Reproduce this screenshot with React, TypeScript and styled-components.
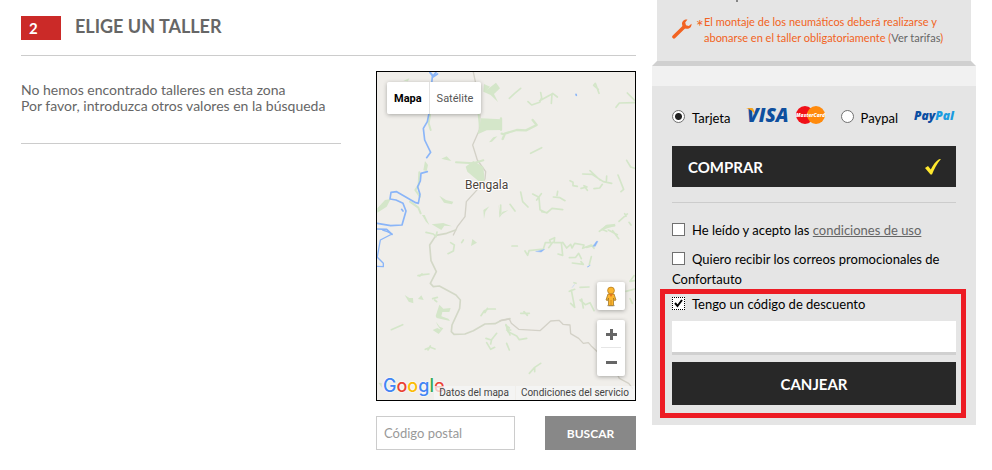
import React, { useState } from "react";
import styled, { createGlobalStyle } from "styled-components";

const GlobalStyle = createGlobalStyle`
  *, *::before, *::after { box-sizing: border-box; }
  body {
    margin: 0;
    background: #fff;
    color: #666;
    font-family: Lato, "Liberation Sans", sans-serif;
    font-size: 14px;
    line-height: 16px;
  }
  button, input { font-family: inherit; margin: 0; }
  button { cursor: pointer; }
`;

const Page = styled.div`
  display: grid;
  grid-template-columns: minmax(0, 1fr) 324px;
  column-gap: 16px;
  align-items: start;
  padding: 0 16px 20px 21px;
`;

/* ---------- Workshop selection ---------- */

const Workshops = styled.main`
  padding-top: 16px;
`;

const StepHeader = styled.header`
  display: flex;
  align-items: flex-start;
  gap: 14px;
  padding-bottom: 15px;
  border-bottom: 1px solid #ccc;
`;

const StepNumber = styled.span`
  width: 40px;
  padding-left: 8px;
  background: #cb2a28;
  color: #fff;
  font-size: 15px;
  font-weight: 700;
  line-height: 24px;
`;

const StepTitle = styled.h2`
  margin: 0;
  font-size: 18px;
  font-weight: 700;
  line-height: 20px;
`;

const Columns = styled.div`
  display: grid;
  grid-template-columns: minmax(0, 1fr) 260px;
  column-gap: 35px;
  align-items: start;
  padding-top: 15px;
`;

const EmptyMessage = styled.p`
  margin: 0;
  padding: 11px 0 29px;
  border-bottom: 1px solid #ccc;
`;

const MapFrame = styled.div`
  position: relative;
  height: 330px;
  border: 1px solid #000;
  background: #f0eeea;
  overflow: hidden;
  font-family: Roboto, sans-serif;
`;

const MapDrawing = styled.svg`
  display: block;
  width: 100%;
  height: 100%;
`;

const MapTypes = styled.div`
  position: absolute;
  top: 10px;
  left: 10px;
  display: flex;
  border-radius: 2px;
  box-shadow: 0 1px 4px rgba(0, 0, 0, 0.3);
`;

const MapType = styled.button<{ $active?: boolean }>`
  height: 32px;
  padding: ${(p) => (p.$active ? "0 7px" : "0 8px 0 7px")};
  border: 0;
  border-left: ${(p) => (p.$active ? "0" : "1px solid #e2e2e2")};
  border-radius: ${(p) => (p.$active ? "2px 0 0 2px" : "0 2px 2px 0")};
  background: #fff;
  color: ${(p) => (p.$active ? "#000" : "#565656")};
  font-size: 11px;
  font-weight: ${(p) => (p.$active ? 700 : 400)};
`;

const MapTools = styled.div`
  position: absolute;
  right: 10px;
  bottom: 24px;
  display: grid;
  gap: 10px;
`;

const ToolGroup = styled.div`
  display: grid;
  width: 28px;
  border-radius: 2px;
  background: #fff;
  box-shadow: 0 1px 4px rgba(0, 0, 0, 0.3);
`;

const ToolButton = styled.button`
  display: grid;
  place-items: center;
  height: 28px;
  padding: 0;
  border: 0;
  background: transparent;
`;

const ToolDivider = styled.span`
  height: 1px;
  margin: -1px 4px;
  background: #e6e6e6;
`;

const GoogleLogo = styled.a`
  position: absolute;
  left: 6px;
  bottom: 0;
  color: #4285f4;
  font-family: Inter, sans-serif;
  font-size: 18px;
  font-weight: 500;
  line-height: 28px;
  text-decoration: none;
  text-shadow: 0 0 2px #fff, 0 0 2px #fff;
`;

const Letter = styled.span<{ $color: string }>`
  color: ${(p) => p.$color};
`;

const MapCredits = styled.div`
  position: absolute;
  right: 0;
  bottom: 0;
  display: flex;
  gap: 1px;
`;

const Credit = styled.a`
  padding: 0 6px 0 5px;
  background: rgba(245, 245, 245, 0.75);
  color: #444;
  font-size: 10px;
  line-height: 14px;
  text-decoration: none;
`;

const SearchForm = styled.form`
  display: flex;
  gap: 30px;
  margin-top: 15px;
`;

const PostalInput = styled.input`
  flex: 1;
  min-width: 0;
  height: 34px;
  padding: 0 7px;
  border: 1px solid #ccc;
  color: #666;
  font-size: 13px;
  &::placeholder { color: #999; opacity: 1; }
`;

const SearchButton = styled.button`
  width: 91px;
  height: 34px;
  padding: 0;
  border: 0;
  background: #888;
  color: #fff;
  font-size: 12px;
  font-weight: 700;
`;

/* ---------- Order summary ---------- */

const Notice = styled.div`
  display: flex;
  align-items: flex-start;
  margin: 0 5px;
  padding: 14px 15px 15px;
  background: #e5e5e5;
  color: #f26322;
  font-size: 11px;
`;

const ClippedLine = styled.div`
  height: 2px;
  margin: 0 5px;
  padding-left: 79px;
  background: #e5e5e5;
  &::before {
    content: "";
    display: block;
    width: 2px;
    height: 2px;
    background: #858585;
  }
`;

const WrenchIcon = styled.svg`
  flex: none;
  margin: 3px 4px 0 0;
`;

const Asterisk = styled.span`
  flex: none;
  width: 8px;
  font-size: 18px;
  line-height: 20px;
`;

const NoticeText = styled.p`
  margin: -2px 0 0;
  white-space: nowrap;
`;

const RatesLink = styled.a`
  color: #666;
  text-decoration: none;
`;

const Lip = styled.div`
  height: 5px;
  background: #d0d0d0;
  clip-path: polygon(5px 0, calc(100% - 5px) 0, 100% 100%, 0 100%);
`;

const Band = styled.div`
  height: 20px;
  background: #f1f1f1;
`;

const Panel = styled.form`
  padding: 20px 20px 7px;
  background: #e5e5e5;
  color: #000;
  font-size: 13px;
  line-height: 20px;
`;

const Methods = styled.div`
  display: flex;
  align-items: flex-start;
  justify-content: space-between;
  height: 40px;
`;

const Method = styled.div`
  display: flex;
  align-items: flex-start;
`;

const MethodLabel = styled.label`
  padding-top: 2px;
`;

const Radio = styled.input`
  appearance: none;
  width: 13px;
  height: 13px;
  margin: 4px 7px 0 0;
  border: 1px solid #707070;
  border-radius: 50%;
  background: #fff;
  &:checked { background: radial-gradient(circle, #222 3px, #fff 4px); }
`;

const CardLogos = styled.svg`
  margin: -6px 0 0 16px;
`;

const PaypalLogo = styled.svg`
  margin-left: 16px;
`;

const BuyButton = styled.button`
  display: flex;
  align-items: center;
  justify-content: space-between;
  width: 100%;
  height: 41px;
  padding: 0 15px 0 16px;
  border: 0;
  background: #282828;
  color: #fff;
  font-size: 15px;
  font-weight: 700;
`;

const Rule = styled.hr`
  margin: 15px 0 17px;
  border: 0;
  border-top: 1px solid #ccc;
`;

const CheckRow = styled.div<{ $spaced?: boolean }>`
  margin-bottom: ${(p) => (p.$spaced ? "9px" : "0")};
`;

const Checkbox = styled.input`
  appearance: none;
  width: 13px;
  height: 13px;
  margin: 0 7px 0 0;
  vertical-align: -1px;
  border: 1px solid #707070;
  background: #fff;
  &:checked {
    border: 1px dotted #000;
    background: #fff url("data:image/svg+xml,%3Csvg xmlns='http://www.w3.org/2000/svg' viewBox='0 0 11 11'%3E%3Cpath d='M2 5l2.5 3L9 2' fill='none' stroke='%23000' stroke-width='2'/%3E%3C/svg%3E");
  }
`;

const TermsLink = styled.a`
  color: #666;
  text-decoration: underline;
`;

const Discount = styled.section`
  margin: 0 -10px 0 -12px;
  padding: 0 5px 8px 7px;
  border: 5px solid #ed1c24;
`;

const CodeInput = styled.input`
  display: block;
  width: 100%;
  height: 34px;
  margin: 7px 0;
  padding: 0 8px;
  border: 0;
  border-bottom: 3px solid #d0d0d0;
  background: #fff;
  font-size: 13px;
`;

const RedeemButton = styled.button`
  display: block;
  width: 100%;
  height: 43px;
  border: 0;
  background: #282828;
  color: #fff;
  font-size: 15px;
  font-weight: 700;
`;

function Terrain() {
  return (
    <MapDrawing viewBox="0 0 258 328" preserveAspectRatio="xMidYMid slice" aria-hidden="true">
      <g fill="none" strokeLinejoin="round" strokeLinecap="round">
        <g transform="translate(-7 -7) scale(.33333)">
          <path d="M310 21L316 50L330 150L328 195L308 240L322 285L347 320L345 342L330 365L289 410L285 455L262 485L250 510" stroke="#d3d1c7" strokeWidth="4" />
          <path d="M333 160L394 163L395 195L350 196L323 208L330 180ZM287 305L310 288L340 305L344 348L330 352L292 320ZM165 288L174 300L170 318L160 316ZM22 430L45 405L62 402L50 425L22 443ZM357 232L370 217L382 214L366 230ZM214 281L230 274L244 288L226 284ZM342 57L360 65L350 75L378 53L390 70L372 87L384 111L362 90L340 80ZM208 392L228 405L250 410L246 418L222 413ZM340 435L358 424L346 440L342 462ZM386 418L391 450L398 440L415 436L396 448L388 458ZM156 450L164 450L178 480L168 470ZM185 478L220 474L246 484L223 482L214 495ZM100 47L118 40L114 49Z" fill="#d4e6c9" />
          <path d="M258 292L310 295L340 286M175 120L180 150L176 175L182 195M148 322L146 360L136 375L150 395M120 410L145 428L152 445M325 140L330 185" stroke="#d4e6c9" strokeWidth="6" />
          <path d="M198 22L187 35L184 68L188 90L178 140L172 170L160 190L164 225L182 262L170 278M172 320L153 325L151 348L143 365L150 388L145 415L137 413L80 380L63 382L60 402L78 405L99 415L108 438L96 480L62 482L22 475M22 492L50 493L66 508M95 433L99 438" stroke="#8ab5f8" strokeWidth="5" />
          <path d="M180 22L190 35L202 27" stroke="#8ab5f8" strokeWidth="6" />
        </g>
        <g transform="translate(123 -7) scale(.33333)" stroke="#d4e6c9" strokeWidth="5">
          <path d="M28 100L44 85L62 70M84 110L95 120L119 112L125 98L122 83M119 107L149 91L158 85L172 96M156 87L154 115M281 61L286 55L297 85M281 61L295 73M348 127L358 114L404 113M382 84L404 106M92 265L125 248" />
          <path d="M3 160V194M5 206L14 208L8 222M14 206L50 195L78 196L110 180L98 165" strokeWidth="7" />
          <path d="M210 347L219 352V362L232 364M248 327L276 328L310 350L335 355M270 317L300 345M320 333L319 352M243 370L261 366L252 362L262 376M282 371L299 369L307 358M354 330L371 373L363 380M380 286L392 306L404 310M62 381L68 410L84 426M30 418L45 438M98 387L117 397L120 434L140 444L156 430L188 434M110 405L124 386M125 440L140 443M160 396L180 398L195 407M173 379L171 391M2 420V447M298 499L320 482L344 482M305 493L320 499M357 469L382 447M374 446L378 454M387 472L393 480" />
          <path d="M318 480L346 476L344 484L322 490L300 499Z" fill="#d4e6c9" stroke="none" />
          <path d="M228 88L229 91" stroke="#8ab5f8" />
        </g>
        <g transform="translate(-7 158) scale(.33333)">
          <path d="M257 0L230 10L198 16L179 45L183 92L199 125L181 160L190 170L208 168L258 195L271 210L269 235L246 285L244 305L252 313L285 312L310 302L345 282L375 281L395 271L420 266" stroke="#d3d8c7" strokeWidth="5" />
          <path d="M168 7L190 12L198 20L201 6M242 38L253 45L250 63L234 71M280 30L275 38M144 137L160 134L177 132M156 132L149 138M64 299L98 284M166 358L181 352L195 357M181 348L174 360M333 257L343 242L355 237L376 237M352 235L345 248M380 310L364 330L348 325M350 338L362 358L374 352M365 328L362 342M408 286L418 294M411 292L420 315M188 206L202 202M194 210L200 215" stroke="#d4e6c9" strokeWidth="5" />
          <path d="M104 195L118 204L129 204L130 220L116 215ZM303 48L307 27L321 38ZM144 207L154 196L161 210ZM197 258L208 224L220 236L242 234L238 246L217 246L214 259L235 266L240 273L200 264ZM198 275L209 290L220 295L206 312L188 300L202 294L212 299L202 285ZM25 458L35 459L36 473Z" fill="#d4e6c9" />
          <path d="M22 80L31 30L66 12L52 5L38 0M22 82L40 100L40 110L22 109" stroke="#8ab5f8" strokeWidth="4" />
        </g>
        <g transform="translate(123 158) scale(.33333)">
          <path d="M0 272L28 267L34 280L56 298L120 302L152 273L177 271L189 283L210 285L212 311L236 325L250 340L265 338L273 347L340 410L358 445L386 460L398 475" stroke="#d3d1c7" strokeWidth="4" />
          <path d="M36 48H52M75 63L83 76L87 62L130 57L136 38L152 38L149 30L164 23L162 38L184 38L188 76L174 72M188 37L200 54L212 43L216 54L224 40L252 45L248 55L274 45L282 55M158 37L146 53M208 83L227 82L236 70L244 86M217 99L250 103L243 95M268 103L274 80M260 52L285 45M214 180L217 196L224 232L212 220M208 184L224 178M240 172L267 171M222 158L228 160M240 210L256 224L270 218L282 242M245 207L250 234M62 250L88 250M72 245L82 256M18 284L24 305L50 318L58 329L80 325M20 300L32 300M20 340L28 360M88 430L104 412L122 400M104 412V425M338 2L356 26M325 0L352 14M378 184L404 177M402 137L390 154L404 152M390 206L397 220" stroke="#d4e6c9" strokeWidth="5" />
          <path d="M279 49L289 34L294 34L286 49ZM108 64L118 62L134 58L124 66ZM262 110L271 105L265 111ZM217 172L223 164" fill="#8ab5f8" stroke="#8ab5f8" strokeWidth="1" />
        </g>
      </g>
      <text x="88" y="117" fontFamily="Roboto, sans-serif" fontSize="12" fill="#4c443b" stroke="#fff" strokeWidth="2" paintOrder="stroke">Bengala</text>
    </MapDrawing>
  );
}

function Pegman() {
  return (
    <svg width="12" height="21" viewBox="0 0 12 21" aria-hidden="true">
      <ellipse cx="6" cy="19.5" rx="4" ry="1" fill="#bbb" />
      <path d="M3 8h6l2 6-1.500.6L8.500 12v7.500h-5V12l-1 2.600L1 14z" fill="#fcb62e" stroke="#a57926" strokeWidth=".8" />
      <path d="M4 8l2 3 2-3z" fill="#e5771e" />
      <path d="M6 14v5" stroke="#c78320" strokeWidth=".8" />
      <circle cx="6" cy="4.500" r="3.400" fill="#fcb62e" stroke="#b57d22" strokeWidth=".8" />
    </svg>
  );
}

export default function App() {
  const [method, setMethod] = useState("card");
  const [hasCode, setHasCode] = useState(true);
  const stay = (e: React.FormEvent) => e.preventDefault();

  return (
    <>
      <GlobalStyle />
      <Page>
        <Workshops>
          <StepHeader>
            <StepNumber>2</StepNumber>
            <StepTitle>ELIGE UN TALLER</StepTitle>
          </StepHeader>
          <Columns>
            <EmptyMessage>
              No hemos encontrado talleres en esta zona
              <br />
              Por favor, introduzca otros valores en la búsqueda
            </EmptyMessage>
            <div>
              <MapFrame>
                <Terrain />
                <MapTypes>
                  <MapType type="button" $active>Mapa</MapType>
                  <MapType type="button">Satélite</MapType>
                </MapTypes>
                <MapTools>
                  <ToolGroup>
                    <ToolButton type="button" aria-label="Street View"><Pegman /></ToolButton>
                  </ToolGroup>
                  <ToolGroup>
                    <ToolButton type="button" aria-label="Acercar">
                      <svg width="11" height="11" viewBox="0 0 11 11"><path d="M5.500 0v11M0 5.500h11" stroke="#666" strokeWidth="3" /></svg>
                    </ToolButton>
                    <ToolDivider />
                    <ToolButton type="button" aria-label="Alejar">
                      <svg width="11" height="11" viewBox="0 0 11 11"><path d="M0 5.500h11" stroke="#666" strokeWidth="3" /></svg>
                    </ToolButton>
                  </ToolGroup>
                </MapTools>
                <GoogleLogo href="#google">
                  G<Letter $color="#ea4335">o</Letter><Letter $color="#fbbc05">o</Letter>g<Letter $color="#34a853">l</Letter><Letter $color="#ea4335">e</Letter>
                </GoogleLogo>
                <MapCredits>
                  <Credit href="#datos">Datos del mapa</Credit>
                  <Credit href="#condiciones">Condiciones del servicio</Credit>
                </MapCredits>
              </MapFrame>
              <SearchForm onSubmit={stay}>
                <PostalInput aria-label="Código postal" placeholder="Código postal" />
                <SearchButton type="submit">BUSCAR</SearchButton>
              </SearchForm>
            </div>
          </Columns>
        </Workshops>

        <aside>
          <ClippedLine />
          <Notice>
            <WrenchIcon width="20" height="20" viewBox="0 0 20 20" aria-hidden="true">
              <path d="M2 17.800L12 8" stroke="#f26322" strokeWidth="3.600" strokeLinecap="round" />
              <path d="M15.500 .5C12.500 0 9.800 2.200 10 5c.1 3 2.500 5 5 4.800 2.700 0 4.800-2 4.500-5L16.800 7 14 6.300 13.200 3.500z" fill="#f26322" />
            </WrenchIcon>
            <Asterisk>*</Asterisk>
            <NoticeText>
              El montaje de los neumáticos deberá realizarse y
              <br />
              abonarse en el taller obligatoriamente (<RatesLink href="#tarifas">Ver tarifas</RatesLink>)
            </NoticeText>
          </Notice>
          <Lip />
          <Band />
          <Panel onSubmit={stay}>
            <Methods>
              <Method>
                <Radio type="radio" id="card" name="method" checked={method === "card"} onChange={() => setMethod("card")} />
                <MethodLabel htmlFor="card">Tarjeta</MethodLabel>
                <CardLogos width="80" height="30" viewBox="0 -6 80 30" role="img" aria-label="Visa, MasterCard">
                  <text x="1" y="16" fontFamily="Open Sans, sans-serif" fontSize="19" fontWeight="800" fontStyle="italic" fill="#0e4f9e">VISA</text>
                  <path d="M0 2h5.500c1.500 0 2 .8 2.400 2.500L9 9C7.500 5.500 4 3 0 2z" fill="#f9a51a" />
                  <circle cx="59" cy="9" r="9" fill="#f01018" />
                  <circle cx="70" cy="9" r="9" fill="#ff8a0c" />
                  <text x="64.500" y="11" textAnchor="middle" fontFamily="Open Sans, sans-serif" fontSize="5" fontWeight="800" fontStyle="italic" fill="#fff">MasterCard</text>
                </CardLogos>
              </Method>
              <Method>
                <Radio type="radio" id="paypal" name="method" checked={method === "paypal"} onChange={() => setMethod("paypal")} />
                <MethodLabel htmlFor="paypal">Paypal</MethodLabel>
                <PaypalLogo width="42" height="20" viewBox="0 0 42 20" role="img" aria-label="PayPal">
                  <text x="0" y="14" fontFamily="Open Sans, sans-serif" fontSize="12" fontWeight="800" fontStyle="italic" fill="#0b4ea2">Pay<tspan fill="#1a9be0">Pal</tspan></text>
                </PaypalLogo>
              </Method>
            </Methods>
            <BuyButton type="submit">
              COMPRAR
              <svg width="16" height="16" viewBox="0 0 16 16" aria-hidden="true">
                <path d="M0 9l3-2 2.800 3.500C8 6 11 2 14 .3L16 0C12 4.500 9 10 7 15.500H5.500z" fill="#ffe82e" />
              </svg>
            </BuyButton>
            <Rule />
            <CheckRow $spaced>
              <Checkbox type="checkbox" id="terms" />
              <label htmlFor="terms">He leído y acepto las </label>
              <TermsLink href="#condiciones-uso">condiciones de uso</TermsLink>
            </CheckRow>
            <CheckRow>
              <Checkbox type="checkbox" id="promo" />
              <label htmlFor="promo">Quiero recibir los correos promocionales de Confortauto</label>
            </CheckRow>
            <Discount>
              <CheckRow>
                <Checkbox type="checkbox" id="has-code" checked={hasCode} onChange={(e) => setHasCode(e.target.checked)} />
                <label htmlFor="has-code">Tengo un código de descuento</label>
              </CheckRow>
              <CodeInput aria-label="Código de descuento" />
              <RedeemButton type="button">CANJEAR</RedeemButton>
            </Discount>
          </Panel>
        </aside>
      </Page>
    </>
  );
}
